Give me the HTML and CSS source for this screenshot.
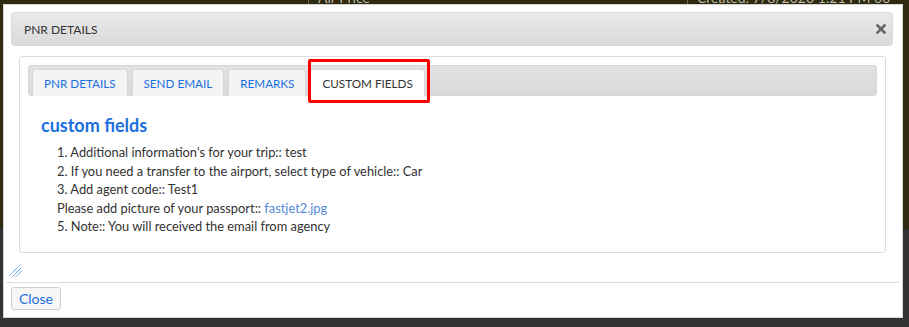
FILE: index.html
```html
<!DOCTYPE html>
<html lang="en">
<head>
  <meta charset="UTF-8" />
  <title>PNR Details</title>
  <link rel="stylesheet" href="styles.css">
</head>
<body>
  <!-- page behind the modal -->
  <div class="backdrop">
    <div class="backdrop-top">
      <div class="bg-row">
        <span class="bg-cell bg-air">Air Price</span>
        <span class="bg-cell bg-created">Created: 7/8/2020 1:21 PM 00</span>
      </div>
    </div>
    <div class="backdrop-bottom"></div>
  </div>

  <!-- PNR dialog -->
  <div class="dialog">
    <div class="titlebar">
      <span class="title">PNR DETAILS</span>
      <button class="close-x" title="Close">
        <svg width="10" height="10" viewBox="0 0 10 10">
          <path d="M1.5 1.5 L8.5 8.5 M8.5 1.5 L1.5 8.5" stroke="#666" stroke-width="2.6" stroke-linecap="square" />
        </svg>
      </button>
    </div>

    <div class="panel">
      <ul class="tabs">
        <li class="tab"><a href="#">PNR DETAILS</a></li>
        <li class="tab"><a href="#">SEND EMAIL</a></li>
        <li class="tab"><a href="#">REMARKS</a></li>
        <li class="tab active">
          <a href="#">CUSTOM FIELDS</a>
          <span class="highlight"></span>
        </li>
      </ul>

      <div class="tab-body">
        <h2>custom fields</h2>
        <div class="fields">
          <div>1. Additional information's for your trip:: test</div>
          <div>2. If you need a transfer to the airport, select type of vehicle:: Car</div>
          <div>3. Add agent code:: Test1</div>
          <div>Please add picture of your passport:: <a href="#">fastjet2.jpg</a></div>
          <div>5. Note:: You will received the email from agency</div>
        </div>
      </div>
    </div>

    <div class="resize-row">
      <svg width="13" height="13" viewBox="0 0 13 13">
        <g stroke="#1a6fe0" stroke-width="1" stroke-dasharray="1 0.6">
          <line x1="0.5" y1="11.5" x2="11.5" y2="0.5" />
          <line x1="3.5" y1="12.5" x2="12.5" y2="3.5" />
          <line x1="7" y1="12.5" x2="12.5" y2="7" />
        </g>
      </svg>
    </div>

    <div class="buttonpane">
      <button class="btn">Close</button>
    </div>
  </div>
</body>
</html>
```

FILE: styles.css
```css
html, body {
  margin: 0;
  padding: 0;
  height: 100%;
  overflow: hidden;
  font-family: Lato, 'Liberation Sans', sans-serif;
  color: #333;
}

.backdrop {
  height: 100%;
  display: flex;
  flex-direction: column;
}

.backdrop-top {
  height: 229px;
  background: #2d2a0f;
  overflow: hidden;
}

.backdrop-bottom {
  flex: 1;
  background: #333;
}

.bg-row {
  display: flex;
  margin-top: -9px;
  font-size: 14px;
  color: #bdbba8;
}

.bg-cell {
  border-left: 1px solid #6d6a55;
  padding-left: 9px;
  line-height: 14px;
}

.bg-air {
  margin-left: 308px;
  width: 369px;
}

/* dialog */
.dialog {
  position: absolute;
  left: 3px;
  top: 4px;
  width: 900px;
  height: 314px;
  box-sizing: border-box;
  background: #fff;
  border: 1px solid #d6d6d6;
  display: flex;
  flex-direction: column;
}

.titlebar {
  margin: 7px 9px 0 7px;
  height: 34px;
  box-sizing: border-box;
  border: 1px solid #d8d8d8;
  border-radius: 4px;
  background: linear-gradient(#e9e9e9, #dadada);
  display: flex;
  align-items: center;
  justify-content: space-between;
  padding: 0 6px 0 12px;
}

.title {
  font-size: 12px;
  color: #333;
}

.close-x {
  border: none;
  background: none;
  padding: 0;
  width: 10px;
  height: 10px;
  display: flex;
  cursor: pointer;
}

.panel {
  margin: 10px 16px 0 15px;
  border: 1px solid #dcdcdc;
  border-radius: 3px;
  padding: 8px;
}

.tabs {
  list-style: none;
  margin: 0;
  padding: 3px 3px 0;
  height: 31px;
  box-sizing: border-box;
  display: flex;
  gap: 4px;
  background: linear-gradient(#e2e2e2, #d9d9d9);
  border: 1px solid #d6d6d6;
  border-radius: 3px;
}

.tab {
  position: relative;
  height: 26px;
  background: #f4f4f4;
  border: 1px solid #d8d8d8;
  border-bottom: none;
  border-radius: 3px 3px 0 0;
}

.tab a {
  display: block;
  padding: 0 11px;
  line-height: 26px;
  font-size: 11.7px;
  color: #1a6fe0;
  text-decoration: none;
}

.tab.active {
  background: #fff;
  height: 27px;
}

.tab.active a {
  color: #333;
}

.highlight {
  position: absolute;
  top: -11px;
  left: -3px;
  width: 116px;
  height: 38px;
  border: 3px solid #f00;
  border-radius: 2px;
}

.tab-body {
  padding: 19px 13px 8px;
}

.tab-body h2 {
  margin: 0;
  font-size: 18px;
  line-height: 20px;
  font-weight: bold;
  color: #1a6fe0;
}

.fields {
  margin: 8px 0 0 16px;
  font-size: 12.85px;
  line-height: 18.5px;
  color: #333;
}

.fields a {
  color: #5489da;
  text-decoration: none;
}

.resize-row {
  height: 29px;
  padding: 8px 0 0 5px;
  box-sizing: border-box;
}

.buttonpane {
  margin: 0 3px 0 2px;
  border-top: 1px solid #dcdcdc;
  padding: 4px 5px;
}

.btn {
  width: 50px;
  height: 23px;
  padding: 0;
  font-family: Lato, 'Liberation Sans', sans-serif;
  font-size: 14px;
  color: #1a6fe0;
  background: #f6f6f6;
  border: 1px solid #cfcfcf;
  border-radius: 3px;
  cursor: pointer;
}
```
